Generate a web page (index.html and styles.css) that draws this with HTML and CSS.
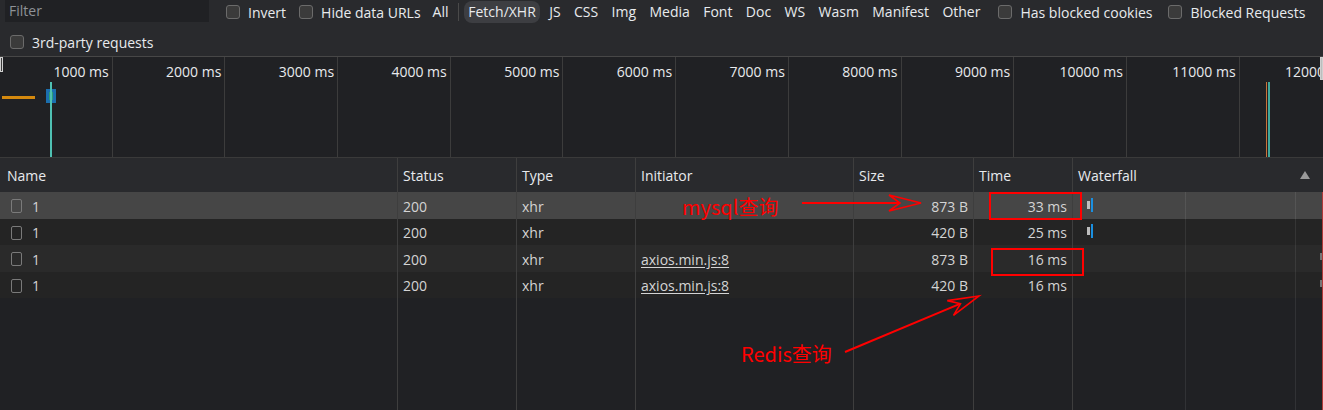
FILE: index.html
```html
<!DOCTYPE html>
<html>
<head>
<meta charset="utf-8">
<title>Network</title>
<link rel="stylesheet" href="styles.css">
</head>
<body>
<div class="panel">
  <div class="toolbar">
    <div class="tb-row tb-row1">
      <div class="filter">Filter</div>
      <div class="cb-item cb-invert"><span class="cb"></span><span>Invert</span></div>
      <div class="cb-item cb-hide"><span class="cb"></span><span>Hide data URLs</span></div>
      <div class="types">
        <span class="type">All</span>
        <span class="sep"></span>
        <span class="type active">Fetch/XHR</span>
        <span class="type">JS</span>
        <span class="type">CSS</span>
        <span class="type">Img</span>
        <span class="type">Media</span>
        <span class="type">Font</span>
        <span class="type">Doc</span>
        <span class="type">WS</span>
        <span class="type">Wasm</span>
        <span class="type">Manifest</span>
        <span class="type">Other</span>
      </div>
      <div class="cb-item cb-cookies"><span class="cb"></span><span>Has blocked cookies</span></div>
      <div class="cb-item cb-blocked"><span class="cb"></span><span>Blocked Requests</span></div>
    </div>
    <div class="tb-row tb-row2">
      <div class="cb-item cb-third"><span class="cb"></span><span>3rd-party requests</span></div>
    </div>
  </div>

  <div class="overview">
    <div class="ticks">
      <div class="tick">1000 ms</div>
      <div class="tick">2000 ms</div>
      <div class="tick">3000 ms</div>
      <div class="tick">4000 ms</div>
      <div class="tick">5000 ms</div>
      <div class="tick">6000 ms</div>
      <div class="tick">7000 ms</div>
      <div class="tick">8000 ms</div>
      <div class="tick">9000 ms</div>
      <div class="tick">10000 ms</div>
      <div class="tick">11000 ms</div>
      <div class="tick">12000 ms</div>
    </div>
    <span class="ov-handle ov-left"></span>
    <span class="ov-handle ov-right"></span>
    <span class="ov-orange"></span>
    <span class="ov-block"></span>
    <span class="ov-teal"></span>
    <span class="ov-orange-line"></span>
    <span class="ov-teal-line"></span>
  </div>

  <div class="table">
    <div class="tr th">
      <div>Name</div>
      <div>Status</div>
      <div>Type</div>
      <div>Initiator</div>
      <div>Size</div>
      <div>Time</div>
      <div class="wf-head">Waterfall<svg class="sort" width="10" height="8" viewBox="0 0 10 8"><polygon points="5,0 10,8 0,8" fill="#9a9a9a"/></svg></div>
    </div>
    <div class="tr row sel">
      <div><span class="file"></span>1</div>
      <div>200</div>
      <div>xhr</div>
      <div></div>
      <div class="num">873 B</div>
      <div class="num">33 ms</div>
      <div class="wf"><span class="bar-gray"></span><span class="bar-blue"></span></div>
    </div>
    <div class="tr row r2">
      <div><span class="file"></span>1</div>
      <div>200</div>
      <div>xhr</div>
      <div></div>
      <div class="num">420 B</div>
      <div class="num">25 ms</div>
      <div class="wf"><span class="bar-gray"></span><span class="bar-blue"></span></div>
    </div>
    <div class="tr row r3">
      <div><span class="file"></span>1</div>
      <div>200</div>
      <div>xhr</div>
      <div><span class="link">axios.min.js:8</span></div>
      <div class="num">873 B</div>
      <div class="num">16 ms</div>
      <div class="wf"><span class="bar-edge"></span></div>
    </div>
    <div class="tr row r4">
      <div><span class="file"></span>1</div>
      <div>200</div>
      <div>xhr</div>
      <div><span class="link">axios.min.js:8</span></div>
      <div class="num">420 B</div>
      <div class="num">16 ms</div>
      <div class="wf"><span class="bar-edge"></span></div>
    </div>
    <div class="tr filler">
      <div></div><div></div><div></div><div></div><div></div><div></div><div class="wf"></div>
    </div>
  </div>

  <svg class="annot" width="1323" height="410" viewBox="0 0 1323 410">
    <rect x="990" y="193" width="91" height="26" fill="none" stroke="#ff0000" stroke-width="2"/>
    <rect x="992" y="249" width="91" height="26" fill="none" stroke="#ff0000" stroke-width="2"/>
    <line x1="802" y1="203" x2="900" y2="203" stroke="#ff0000" stroke-width="2"/>
    <polygon points="921,203 889,195 900,203 889,211" fill="none" stroke="#ff0000" stroke-width="1.6"/>
    <line x1="845" y1="352" x2="960.5" y2="303.7" stroke="#ff0000" stroke-width="2"/>
    <polygon points="979,296 947.3,300.6 960.5,303.7 953.5,315.4" fill="none" stroke="#ff0000" stroke-width="1.6"/>
    <text class="note" x="682" y="214.5">mysql查询</text>
    <text class="note" x="741" y="361.5">Redis查询</text>
  </svg>
</div>
</body>
</html>
```

FILE: styles.css
```css
html, body {
  margin: 0;
  padding: 0;
  background: #202124;
}

.panel {
  position: relative;
  width: 1323px;
  height: 410px;
  overflow: hidden;
  display: flex;
  flex-direction: column;
  background: #202124;
  font-family: "Open Sans", "Liberation Sans", sans-serif;
  font-size: 14px;
  color: #e8eaed;
}

/* ---------- toolbar ---------- */
.toolbar {
  background: #292a2d;
  flex: 0 0 auto;
}

.tb-row {
  display: flex;
  align-items: center;
  white-space: nowrap;
}

.tb-row1 {
  height: 24px;
}

.tb-row2 {
  height: 32px;
  padding-top: 4px;
  box-sizing: border-box;
}

.filter {
  align-self: flex-start;
  margin-left: 5px;
  width: 204px;
  height: 22px;
  line-height: 22px;
  padding-left: 4px;
  box-sizing: border-box;
  background: #202124;
  color: #8e9297;
}

.cb-item {
  display: flex;
  align-items: center;
  gap: 8px;
}

.cb {
  width: 14px;
  height: 14px;
  box-sizing: border-box;
  border: 1px solid #6b6b6b;
  border-radius: 3px;
  background: #3b3b3b;
}

.cb-invert { margin-left: 17px; }
.cb-hide { margin-left: 13px; }
.cb-cookies { margin-left: 14px; }
.cb-blocked { margin-left: 16px; }
.cb-third { margin-left: 10px; }

.types {
  display: flex;
  align-items: center;
  gap: 5.4px;
  margin-left: 8px;
}

.type {
  padding: 0 4px;
  height: 22px;
  line-height: 22px;
  border-radius: 8px;
}

.type.active {
  background: #3d3e42;
}

.sep {
  width: 1px;
  height: 18px;
  background: #4a4a4a;
}

/* ---------- overview ---------- */
.overview {
  position: relative;
  flex: 0 0 102px;
  box-sizing: border-box;
  border-top: 1px solid #474747;
  border-bottom: 1px solid #3a3a3a;
  overflow: hidden;
  background: #202124;
}

.ticks {
  display: flex;
  height: 100%;
}

.tick {
  flex: 0 0 112.7px;
  box-sizing: border-box;
  border-right: 1px solid #3c3c3c;
  text-align: right;
  padding-right: 3px;
  padding-top: 5px;
  line-height: 20px;
  white-space: nowrap;
  color: #e8eaed;
}

.ov-handle {
  position: absolute;
  top: 0;
  width: 3px;
  box-sizing: border-box;
  border: 1px solid #d0d0d0;
  background: #3a3a3a;
}

.ov-left {
  left: 0;
  height: 15px;
}

.ov-right {
  right: 0;
  height: 23px;
  background: #bdbdbd;
}

.ov-orange {
  position: absolute;
  left: 2px;
  top: 39px;
  width: 33px;
  height: 3px;
  background: #d4890e;
}

.ov-block {
  position: absolute;
  left: 46px;
  top: 32px;
  width: 10px;
  height: 14px;
  box-sizing: border-box;
  border: 3px solid #1b6fae;
  background: #2a9c76;
}

.ov-teal {
  position: absolute;
  left: 50px;
  top: 25px;
  width: 2px;
  bottom: 0;
  background: #4fc1b3;
}

.ov-orange-line {
  position: absolute;
  left: 1266px;
  top: 25px;
  width: 1px;
  bottom: 0;
  background: #c9743a;
}

.ov-teal-line {
  position: absolute;
  left: 1268px;
  top: 25px;
  width: 2px;
  bottom: 0;
  background: #3fa89b;
}

/* ---------- table ---------- */
.table {
  flex: 1 1 auto;
  display: flex;
  flex-direction: column;
  min-height: 0;
}

.tr {
  display: grid;
  grid-template-columns: 397px 119px 119px 218px 120px 99px 1fr;
}

.tr > div {
  border-left: 1px solid #3e3e3e;
  padding: 0 5px;
  display: flex;
  align-items: center;
  white-space: nowrap;
  overflow: hidden;
  box-sizing: border-box;
}

.tr > div:first-child {
  border-left: none;
  padding-left: 7px;
}

.th {
  height: 34px;
  background: #292a2d;
  color: #e8eaed;
}

.wf-head {
  justify-content: space-between;
}

.th .wf-head {
  padding-right: 13px;
}

.row {
  height: 26.5px;
  color: #d4d4d4;
}

.row > div {
  padding-top: 2px;
}

.row.sel { background: #464646; }
.row.r2 { background: #242424; }
.row.r3 { background: #2a2a2a; }
.row.r4 { background: #242424; }

.tr > div.num {
  justify-content: flex-end;
  padding-right: 5px;
}

.file {
  display: inline-block;
  width: 11px;
  height: 14px;
  box-sizing: border-box;
  border: 1.5px solid #7a7a7a;
  border-radius: 2px;
  margin-left: 4px;
  margin-right: 10px;
}

.link {
  text-decoration: underline;
  text-underline-offset: 2px;
}

.tr > div.wf {
  position: relative;
  padding: 0;
  background-image: linear-gradient(to right,
    transparent 112px, rgba(255,255,255,0.08) 112px, rgba(255,255,255,0.08) 113px, transparent 113px,
    transparent 222px, rgba(255,255,255,0.08) 222px, rgba(255,255,255,0.08) 223px, transparent 223px,
    transparent 249px, #b03838 249px);
}

.bar-gray {
  position: absolute;
  left: 14px;
  top: 8.5px;
  width: 3px;
  height: 8px;
  background: #bdbdbd;
}

.bar-blue {
  position: absolute;
  left: 18px;
  top: 5.5px;
  width: 2px;
  height: 14px;
  background: #1a8fe0;
}

.bar-edge {
  position: absolute;
  left: 247px;
  top: 8px;
  width: 2px;
  height: 7px;
  background: #777777;
}

.filler {
  flex: 1 1 auto;
  background: #202124;
}

/* ---------- annotations ---------- */
.annot {
  position: absolute;
  left: 0;
  top: 0;
  pointer-events: none;
}

.note {
  font-family: "Noto Sans CJK SC", "Noto Sans", sans-serif;
  font-size: 20px;
  fill: #ff0000;
}
```
